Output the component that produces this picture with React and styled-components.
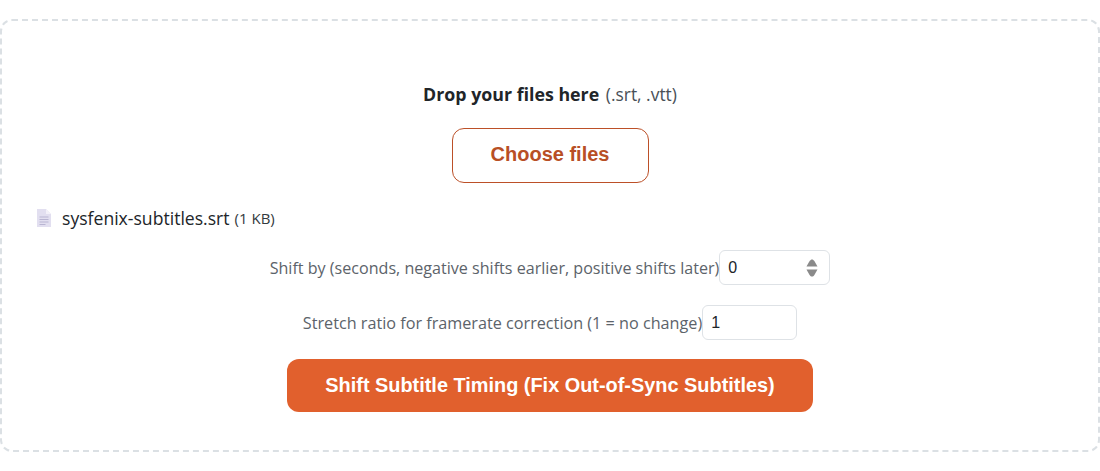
import React from "react";
import styled, { createGlobalStyle } from "styled-components";

const Global = createGlobalStyle`
  html, body { margin: 0; padding: 0; background: #fff; }
  body { font-family: "Open Sans", "Noto Sans", "Liberation Sans", sans-serif; }
`;

const Page = styled.div`
  padding: 19px 0 0 0;
  width: 1100px;
  height: 452px;
  box-sizing: border-box;
`;

const DropZone = styled.div`
  box-sizing: border-box;
  height: 433px;
  border: 2px dashed #dbe0e4;
  border-radius: 12px;
  padding: 59px 0 0;
  display: flex;
  flex-direction: column;
  align-items: center;
`;

const Heading = styled.p`
  margin: 0;
  font-size: 17.8px;
  line-height: 28px;
  color: #495057;
`;

const Strong = styled.strong`
  font-weight: 700;
  color: #212529;
  margin-right: 2px;
`;

const Extensions = styled.span`
  font-size: 17.4px;
`;

const ChooseButton = styled.button`
  box-sizing: border-box;
  width: 197px;
  height: 55px;
  margin-top: 20px;
  padding: 0 6px 2px;
  background: #fff;
  border: 1px solid #bc5028;
  border-radius: 12px;
  color: #b84f25;
  font: 700 20px "Liberation Sans", Arial, sans-serif;
`;

const FileRow = styled.div`
  align-self: flex-start;
  display: flex;
  align-items: center;
  margin: 23px 0 0 34px;
  height: 24px;
  gap: 10px;
`;

const FileName = styled.span`
  font-size: 17.6px;
  color: #212529;
`;

const FileSize = styled.span`
  font-size: 15px;
  color: #343a40;
  margin-left: -5px;
`;

const Field = styled.div`
  display: flex;
  align-items: center;
  justify-content: center;
  margin-top: ${(p) => p.$top}px;
`;

const Label = styled.label`
  font-size: ${(p) => p.$size}px;
  color: #5c636a;
`;

const Box = styled.div`
  box-sizing: border-box;
  width: ${(p) => p.$w}px;
  height: 35px;
  border: 1px solid #dee2e6;
  border-radius: 6px;
  padding: 0 8px;
  display: flex;
  align-items: center;
  justify-content: space-between;
  font: 400 16px "Liberation Sans", Arial, sans-serif;
  color: #212529;
  background: #fff;
`;

const Submit = styled.button`
  box-sizing: border-box;
  width: 526px;
  height: 53px;
  margin-top: 19px;
  background: #e1602d;
  border: 0;
  border-radius: 12px;
  color: #fff;
  font: 700 19.9px "Liberation Sans", Arial, sans-serif;
`;

const DocIcon = () => (
  <svg width="16" height="20" viewBox="0 0 16 20" aria-hidden="true">
    <path d="M1 1h9l5 5v13H1z" fill="#e2dff0" />
    <path d="M10 1l5 5h-5z" fill="#f3f1f9" />
    <path d="M3.5 9h9M3.5 11.5h9M3.5 14h9M3.5 16.5h6" stroke="#b9b5d2" strokeWidth="1" />
  </svg>
);

const SpinIcon = () => (
  <svg width="12" height="18" viewBox="0 0 12 18" aria-hidden="true" style={{ marginRight: 3 }}>
    <path d="M6 0.5c1 0 1.6.6 2.4 1.6L11.5 7.5H.5L3.6 2.1C4.4 1.1 5 .5 6 .5z" fill="#8a8a8a" />
    <path d="M.5 10.5h11L8.4 15.9C7.6 16.9 7 17.5 6 17.5s-1.6-.6-2.4-1.6z" fill="#8a8a8a" />
  </svg>
);

export default function App() {
  return (
    <Page>
      <Global />
      <DropZone>
        <Heading>
          <Strong>Drop your files here</Strong> <Extensions>(.srt, .vtt)</Extensions>
        </Heading>
        <ChooseButton>Choose files</ChooseButton>
        <FileRow>
          <DocIcon />
          <FileName>sysfenix-subtitles.srt</FileName>
          <FileSize>(1 KB)</FileSize>
        </FileRow>
        <Field $top={20}>
          <Label $size={16.1}>Shift by (seconds, negative shifts earlier, positive shifts later)</Label>
          <Box $w={111}>
            0
            <SpinIcon />
          </Box>
        </Field>
        <Field $top={20}>
          <Label $size={16.2}>Stretch ratio for framerate correction (1 = no change)</Label>
          <Box $w={95}>1</Box>
        </Field>
        <Submit>Shift Subtitle Timing (Fix Out-of-Sync Subtitles)</Submit>
      </DropZone>
    </Page>
  );
}
